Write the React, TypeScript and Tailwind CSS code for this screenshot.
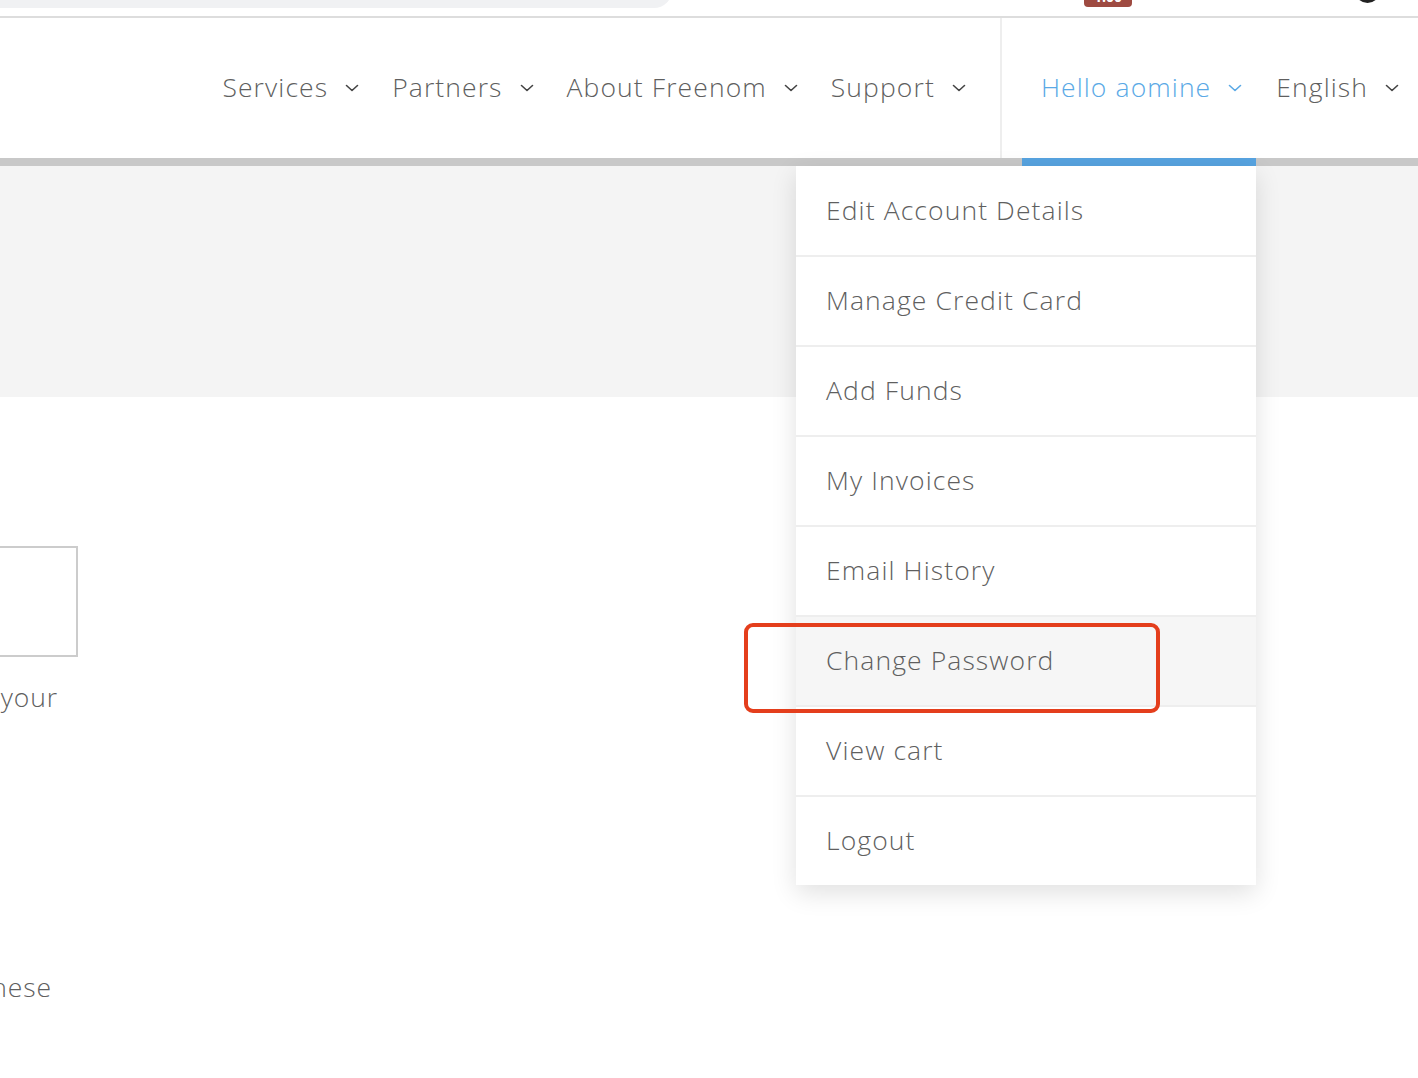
import React from 'react'

const font = { fontFamily: '"Open Sans", "Noto Sans", sans-serif' }

const Chevron = ({ className = '' }: { className?: string }) => (
  <svg
    viewBox="0 0 14 8"
    className={`w-[14px] h-[8px] ${className}`}
    fill="none"
    stroke="currentColor"
    strokeWidth={1.6}
    strokeLinecap="round"
    strokeLinejoin="round"
  >
    <path d="M1.5 1.5 7 6.5l5.5-5" />
  </svg>
)

const NavItem = ({ label, active = false }: { label: string; active?: boolean }) => (
  <div
    className={`flex items-center gap-[17px] whitespace-nowrap text-[26.5px] font-light tracking-[1.1px] ${
      active ? 'text-[#5aa9e6]' : 'text-[#5f5f5f]'
    }`}
  >
    <span>{label}</span>
    <Chevron className={active ? 'text-[#5aa9e6]' : 'text-[#444]'} />
  </div>
)

const menu = [
  'Edit Account Details',
  'Manage Credit Card',
  'Add Funds',
  'My Invoices',
  'Email History',
  'Change Password',
  'View cart',
  'Logout',
]

export default function App() {
  return (
    <div className="relative w-[1418px] h-[1078px] overflow-hidden bg-white" style={font}>
      {/* browser strip */}
      <div className="flex h-[16px] overflow-hidden">
        <div className="w-[672px] h-[32px] mt-[-24px] bg-[#f0f1f3] rounded-br-[18px]" />
        <div className="ml-[412px] w-[48px] h-[20px] mt-[-13px] rounded-[4px] bg-[#9e4a41] text-white text-[14px] font-bold leading-[20px] text-center">
          1.00
        </div>
        <div className="ml-[223px] w-[25px] h-[25px] mt-[-22px] rounded-full bg-[#222]" />
      </div>
      <div className="h-[2px] bg-[#dddddd]" />

      {/* header */}
      <header className="flex h-[140px] justify-end">
        <nav className="flex items-center gap-[33px] pr-[34px]">
          <NavItem label="Services" />
          <NavItem label="Partners" />
          <NavItem label="About Freenom" />
          <NavItem label="Support" />
        </nav>
        <div className="w-[2px] bg-[#eeeeee]" />
        <nav className="flex items-center gap-[34px] pl-[39px] pr-[19px]">
          <NavItem label="Hello aomine" active />
          <NavItem label="English" />
        </nav>
      </header>
      <div className="flex h-[8px] bg-[#c8c8c8]">
        <div className="ml-[1022px] w-[234px] bg-[#57a3e0]" />
      </div>

      {/* gray band */}
      <div className="h-[231px] bg-[#f4f4f4]" />

      {/* page content, cut at the left edge */}
      <div className="pt-[149px] text-[26.5px] font-light text-[#5f5f5f] tracking-[0.9px]">
        <div className="ml-[-300px] w-[378px] h-[111px] border-2 border-[#cccccc]" />
        <div className="mt-[22px] flex w-[58px] justify-end overflow-hidden whitespace-nowrap leading-[36px]">
          <span>your</span>
        </div>
        <div className="mt-[254px] flex w-[52px] justify-end overflow-hidden whitespace-nowrap leading-[36px]">
          <span>these</span>
        </div>
      </div>

      {/* account dropdown */}
      <div className="absolute left-[796px] top-[166px] w-[460px] bg-white shadow-[0_8px_24px_rgba(0,0,0,0.12)]">
        {menu.map((item, i) => (
          <div
            key={item}
            className={`flex items-center pl-[30px] text-[26.5px] font-light tracking-[1.1px] text-[#5f5f5f] ${
              i > 0 ? 'h-[90px] border-t-2 border-[#eeeeee]' : 'h-[89px]'
            } ${item === 'Change Password' ? 'bg-[#f6f6f6]' : ''}`}
          >
            {item}
          </div>
        ))}
      </div>

      {/* annotation */}
      <div className="absolute left-[744px] top-[623px] w-[416px] h-[90px] rounded-[9px] border-[4px] border-[#e43e1c]" />
    </div>
  )
}
